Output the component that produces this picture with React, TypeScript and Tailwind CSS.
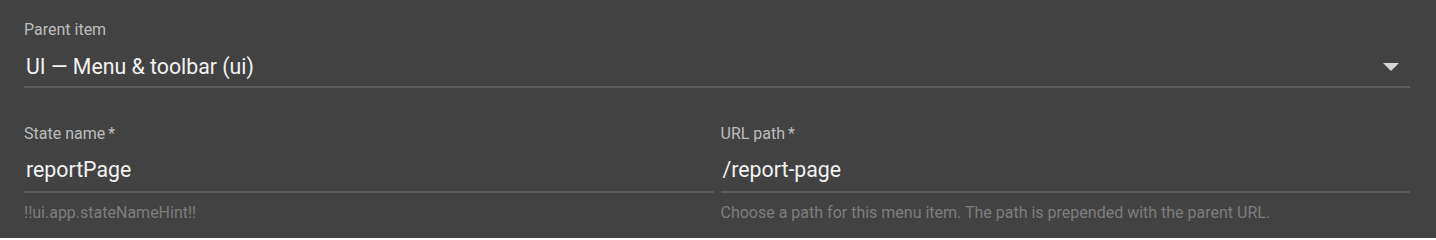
import React from "react"

const font = { fontFamily: "Roboto, 'Liberation Sans', sans-serif" }

function Field({ label, value, hint, required }: { label: string; value: string; hint?: string; required?: boolean }) {
  return (
    <div className="flex flex-col flex-1 min-w-0">
      <label className="text-[16px] leading-[20px] text-[#bdbdbd]">
        {label}
        {required && <span className="ml-[3px]">*</span>}
      </label>
      <div className="mt-[14px] h-[24px] flex items-center text-[21.3px] text-[#f2f2f2] pl-[2px]">{value}</div>
      <div className="mt-[9px] h-[2px] bg-[#5c5c5c]" />
      <div className="mt-[10px] text-[16px] leading-[20px] text-[#7d7d7d] h-[20px]">{hint}</div>
    </div>
  )
}

export default function App() {
  return (
    <div className="w-[1436px] h-[238px] bg-[#424242] pl-6 pr-[26px] pt-[20px]" style={font}>
      <div className="flex flex-col">
        <label className="text-[16px] leading-[20px] text-[#bdbdbd]">Parent item</label>
        <div className="mt-[15px] h-[24px] flex items-center justify-between text-[21.3px] text-[#f2f2f2] pl-[2px]">
          <span>UI — Menu &amp; toolbar (ui)</span>
          <svg width="16" height="8" viewBox="0 0 16 8" className="mr-[11px]">
            <path d="M0 0 L16 0 L8 8 Z" fill="#d4d4d4" />
          </svg>
        </div>
        <div className="mt-[7px] h-[2px] bg-[#5c5c5c]" />
      </div>
      <div className="flex gap-[7px] mt-[36px]">
        <Field label="State name" required value="reportPage" hint="!!ui.app.stateNameHint!!" />
        <Field
          label="URL path"
          required
          value="/report-page"
          hint="Choose a path for this menu item. The path is prepended with the parent URL."
        />
      </div>
    </div>
  )
}
